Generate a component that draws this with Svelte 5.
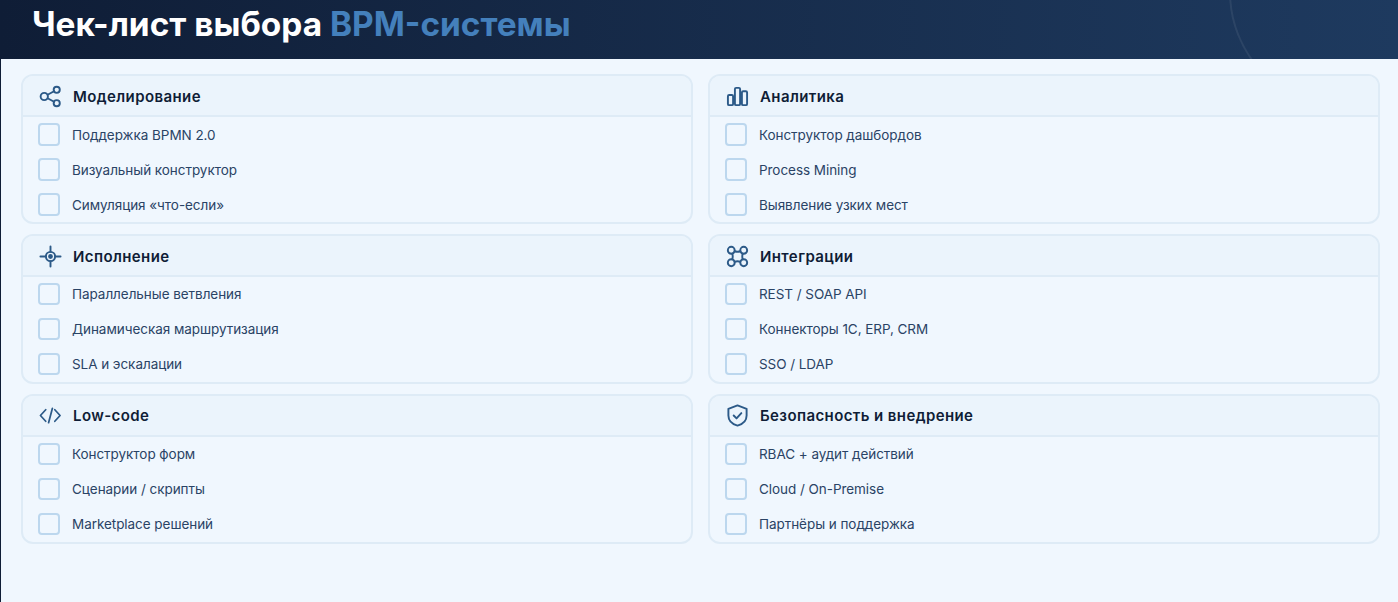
<script lang="ts">
  type Section = { title: string; icon: string; items: string[] };

  const sections: Section[] = [
    { title: 'Моделирование', icon: 'share', items: ['Поддержка BPMN 2.0', 'Визуальный конструктор', 'Симуляция «что-если»'] },
    { title: 'Аналитика', icon: 'bars', items: ['Конструктор дашбордов', 'Process Mining', 'Выявление узких мест'] },
    { title: 'Исполнение', icon: 'target', items: ['Параллельные ветвления', 'Динамическая маршрутизация', 'SLA и эскалации'] },
    { title: 'Интеграции', icon: 'nodes', items: ['REST / SOAP API', 'Коннекторы 1С, ERP, CRM', 'SSO / LDAP'] },
    { title: 'Low-code', icon: 'code', items: ['Конструктор форм', 'Сценарии / скрипты', 'Marketplace решений'] },
    { title: 'Безопасность и внедрение', icon: 'shield', items: ['RBAC + аудит действий', 'Cloud / On-Premise', 'Партнёры и поддержка'] }
  ];
</script>

<div class="page">
  <header class="top">
    <h1>Чек-лист выбора <span>BPM-системы</span></h1>
    <div class="ring"></div>
  </header>

  <main class="grid">
    {#each sections as s}
      <section class="card">
        <div class="head">
          <svg class="icon" viewBox="0 0 24 24" fill="none" stroke="currentColor" stroke-width="2" stroke-linecap="round" stroke-linejoin="round">
            {#if s.icon === 'share'}
              <circle cx="5.5" cy="12" r="3.8" />
              <circle cx="18.5" cy="5" r="3.2" />
              <circle cx="18.5" cy="19" r="3.2" />
              <path d="M9 10.2 15.7 6.5M9 13.8l6.7 3.7" />
            {:else if s.icon === 'bars'}
              <rect x="2" y="10.5" width="5.4" height="10.5" rx="1.3" />
              <rect x="9.3" y="3" width="5.4" height="18" rx="1.3" />
              <rect x="16.6" y="6.5" width="5.4" height="14.5" rx="1.3" />
            {:else if s.icon === 'target'}
              <circle cx="12" cy="12" r="4.8" />
              <circle cx="12" cy="12" r="1.5" fill="currentColor" />
              <path d="M12 1.5V7M12 17v5.5M1.5 12H7M17 12h5.5" />
            {:else if s.icon === 'nodes'}
              <circle cx="5.5" cy="5.5" r="3.6" />
              <circle cx="18.5" cy="5.5" r="3.6" />
              <circle cx="5.5" cy="18.5" r="3.6" />
              <circle cx="18.5" cy="18.5" r="3.6" />
              <path d="M9 6.500c2 .7 4 .7 6 0M9 17.500c2-.7 4-.7 6 0M6.500 9c.7 2 .7 4 0 6M17.500 9c-.7 2-.7 4 0 6" />
            {:else if s.icon === 'code'}
              <path d="M7 6 1.500 12 7 18M16.500 6l5.500 6-5.500 6M14 4.500 10 19.500" stroke-width="1.8" />
            {:else}
              <path d="M12 1.500 21.500 5v7c0 5-3.800 9-9.500 10.500C6.300 21 2.500 17 2.500 12V5z" />
              <path d="m8 12 3 3 5-5.500" />
            {/if}
          </svg>
          <h2>{s.title}</h2>
        </div>
        <ul>
          {#each s.items as item}
            <li><span class="box"></span>{item}</li>
          {/each}
        </ul>
      </section>
    {/each}
  </main>
</div>

<style>
  :global(body) {
    margin: 0;
    background: #f0f7fe;
  }

  .page {
    height: 602px;
    border-left: 1px solid #0f1d36;
    background: #f0f7fe;
    font-family: Inter, "Noto Sans", sans-serif;
    overflow: hidden;
  }

  .top {
    position: relative;
    height: 59px;
    display: flex;
    align-items: center;
    padding-left: 31px;
    background: linear-gradient(90deg, #0f1d36 0%, #1e3a5f 100%);
    overflow: hidden;
  }

  h1 {
    margin: 0 0 12px;
    font-size: 33.4px;
    font-weight: 700;
    color: #fff;
  }

  h1 span {
    color: #4480bc;
  }

  .ring {
    position: absolute;
    left: 1228px;
    top: -125px;
    width: 230px;
    height: 230px;
    border: 2px solid rgba(255, 255, 255, 0.07);
    border-radius: 50%;
  }

  .grid {
    display: grid;
    grid-template-columns: 1fr 1fr;
    gap: 9.8px 15px;
    padding: 15px 18px 0 20px;
  }

  .card {
    height: 150px;
    box-sizing: border-box;
    border: 2px solid #deebf6;
    border-radius: 12px;
    background: #f0f7fe;
    overflow: hidden;
  }

  .head {
    height: 37.5px;
    padding-top: 1.5px;
    display: flex;
    align-items: center;
    gap: 11px;
    padding-left: 16px;
    background: #ebf4fc;
    border-bottom: 2px solid #deebf6;
  }

  .icon {
    width: 23px;
    height: 23px;
    color: #2c5a88;
    flex: none;
  }

  h2 {
    margin: 0;
    font-size: 15px;
    font-weight: 600;
    letter-spacing: 0.4px;
    color: #0f1d36;
  }

  ul {
    margin: 0;
    padding: 0;
    list-style: none;
  }

  li {
    height: 35px;
    display: flex;
    align-items: center;
    gap: 11.6px;
    padding-left: 15px;
    font-size: 13.5px;
    letter-spacing: -0.05px;
    color: #2a4365;
  }

  .box {
    width: 22.4px;
    height: 22.4px;
    box-sizing: border-box;
    border: 2px solid #bcd7ee;
    border-radius: 4px;
    flex: none;
  }
</style>
